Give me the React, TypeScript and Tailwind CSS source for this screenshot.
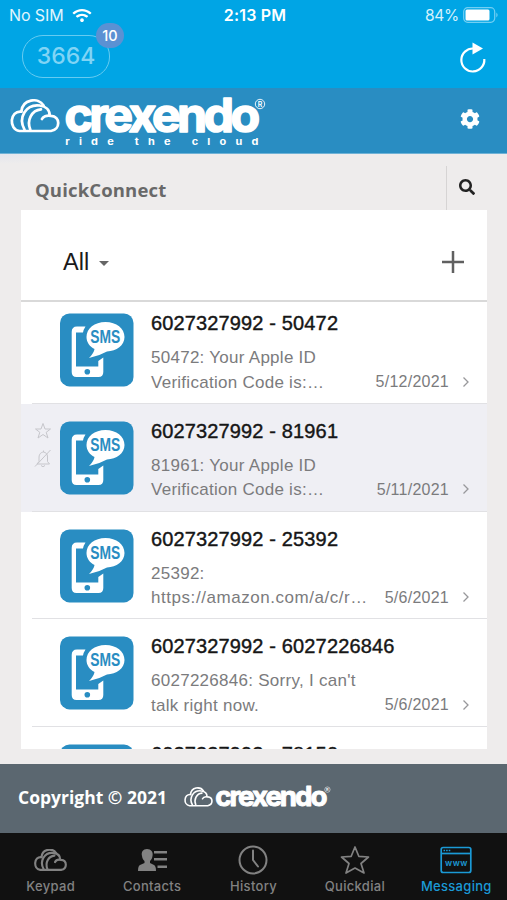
import { FaCog, FaSearch, FaWifi } from "react-icons/fa";

const rows = [
    { title: "6027327992 - 50472", lines: ["50472: Your Apple ID", "Verification Code is:…"], date: "5/12/2021" },
    { title: "6027327992 - 81961", lines: ["81961: Your Apple ID", "Verification Code is:…"], date: "5/11/2021", active: true },
    { title: "6027327992 - 25392", lines: ["25392:", "https://amazon.com/a/c/r…"], date: "5/6/2021", wide: true },
    { title: "6027327992 - 6027226846", lines: ["6027226846: Sorry, I can't", "talk right now."], date: "5/6/2021" },
    { title: "6027327992 - 78150", lines: ["", ""], date: "" },
];

function Cloud({ className, stroke = 8.5 }: { className?: string; stroke?: number }) {
    return (
        <svg viewBox="11 19 155 103" className={className} fill="none" stroke="currentColor" strokeWidth={stroke} strokeLinecap="round">
            <path d="M46 57C10 53 6 112 40 117H138C168 112 168 72 138 70C124 67 113 73 110 80" />
            <path d="M46 57C50 17 98 12 115 38" />
            <path d="M56 113C35 75 61 32 104 38C122 40 134 52 134 68" />
            <path d="M74 113C62 83 78 53 107 50" />
        </svg>
    );
}

function Wordmark({ className }: { className?: string }) {
    return (
        <svg viewBox="0 0 204 54" className={className} fill="currentColor">
            <text x="0.500" y="36" fontFamily="Inter, sans-serif" fontWeight="700" fontSize="47" letterSpacing="-3.500" textLength="192" lengthAdjust="spacingAndGlyphs" stroke="currentColor" strokeWidth="1.600" strokeLinejoin="round">crexendo</text>
            <circle cx="196" cy="8" r="4.700" fill="none" stroke="currentColor" strokeWidth="0.900" />
            <text x="196" y="10.700" textAnchor="middle" fontFamily="Inter, sans-serif" fontWeight="600" fontSize="7">R</text>
        </svg>
    );
}

function SmsIcon() {
    return (
        <svg viewBox="0 0 74 74" className="size-[74px] shrink-0">
            <rect x="0" y="0.400" width="73.500" height="73" rx="9.500" fill="#298dc2" />
            <path fill="#fff" d="M17 13.500H25.500Q23.500 16.500 23 19.500H16V53.500H38.300V48L43.300 44.500V59Q43.300 64 38.500 64H16.500Q11.700 64 11.700 59V19Q11.700 13.500 17 13.500Z" />
            <circle cx="27.300" cy="58.700" r="2.800" fill="#298dc2" />
            <path fill="#fff" d="M45.500 9C56.500 9 64.500 15.500 64.500 24C64.500 32.500 56.500 38 47 38.500Q39 43 29 45Q34 40 34.500 36C29.500 33.500 26.500 29 26.500 24C26.500 15.500 34.500 9 45.500 9Z" />
            <text x="45.300" y="30.300" textAnchor="middle" fontFamily="Liberation Sans, sans-serif" fontWeight="700" fontSize="17.500" textLength="30" lengthAdjust="spacingAndGlyphs" fill="#298dc2">SMS</text>
        </svg>
    );
}

function Row({ row }: { row: (typeof rows)[number] }) {
    return (
        <div className={`flex h-[107.800px] shrink-0 ${row.active ? "bg-[#efeff4]" : "bg-white"}`}>
            <div className="flex w-[11px] shrink-0" />
            <div className="flex flex-1 border-b border-[#e1e1e4]">
                <div className="flex w-[28px] shrink-0 flex-col gap-[9px] pt-[18px] pl-[2px] text-[#c6c6cb]">
                    {row.active && (
                        <>
                            <svg viewBox="0 0 18 18" className="size-[18px]" fill="none" stroke="currentColor" strokeLinejoin="round">
                                <path d="M9 1.500L11 7H16.500L12.200 10.300L14 16L9 12.500L4 16L5.800 10.300L1.500 7H7Z" />
                            </svg>
                            <svg viewBox="0 0 18 20" className="h-[20px] w-[18px]" fill="none" stroke="currentColor">
                                <path d="M1 17.500L16.500 1M3 15H15.500L13.500 12.500V8C13.500 5 12 3.500 9.500 3V1.500M9.500 3C6 3.500 5 6 5 9V12.500L3 15M7 16.500Q9 19 11 16.500" />
                            </svg>
                        </>
                    )}
                </div>
                <div className="pt-[17px]"><SmsIcon /></div>
                <div className="flex flex-1 flex-col pt-[15px] pl-[17px]">
                    <div className="text-[20px] leading-[25px] font-normal tracking-[0.14px] whitespace-nowrap text-[#161616] [-webkit-text-stroke:0.4px_#161616]">{row.title}</div>
                    <div className="mt-[10px] flex justify-between text-[#7b7b7d]">
                        <div className={`text-[17px] leading-[24.500px] whitespace-nowrap ${row.wide ? "w-[217px] tracking-[0.550px]" : "tracking-[0.270px]"}`}>
                            <div className="h-[24.500px] tracking-[0.270px]">{row.lines[0]}</div>
                            <div>{row.lines[1]}</div>
                        </div>
                        {row.date && (
                            <div className="flex items-center gap-[13px] self-end pr-[17px] pb-[1px] text-[16px] leading-[25px] tracking-[0.250px]">
                                {row.date}
                                <svg viewBox="0 0 8 12" className="h-[12px] w-[8px]" fill="none" stroke="#98989b" strokeWidth="1.300">
                                    <path d="M1.500 1.500L6 6L1.500 10.500" />
                                </svg>
                            </div>
                        )}
                    </div>
                </div>
            </div>
        </div>
    );
}

const tabs = [
    { label: "Keypad", icon: <Cloud className="h-[22px] w-[33px]" stroke={10} /> },
    {
        label: "Contacts",
        icon: (
            <svg viewBox="0 0 30 24" className="h-[24px] w-[30px]" fill="currentColor">
                <path d="M10 1C14 1 16.500 4 15.500 8C15 11 14 12 13 13V15L17 17Q19 18 19 23H1Q1 18 3 17L7.500 15V13C6.500 12 5.400 11 5 8C4 4 6 1 10 1Z" />
                <path d="M17 3H30V5.500H17ZM17 10H30V12.500H17ZM20.500 17.500H30V20H20.500Z" />
            </svg>
        ),
    },
    {
        label: "History",
        icon: (
            <svg viewBox="0 0 30 30" className="size-[30px]" fill="none" stroke="currentColor" strokeWidth="2">
                <circle cx="15" cy="15" r="13.500" />
                <path d="M15 5.500V15L20 21.500" strokeLinecap="round" />
            </svg>
        ),
    },
    {
        label: "Quickdial",
        icon: (
            <svg viewBox="0 0 30 30" className="size-[30px]" fill="none" stroke="currentColor" strokeWidth="1.700" strokeLinejoin="round">
                <path d="M15 2L18.800 11.300L28.500 12L21 18.500L24 28L15 23L6 28L9 18.500L1.500 12L11.200 11.300Z" />
            </svg>
        ),
    },
    {
        label: "Messaging",
        active: true,
        icon: (
            <svg viewBox="0 0 32 28" className="h-[28px] w-[32px]" fill="none" stroke="currentColor" strokeWidth="1.700">
                <rect x="1.200" y="1.500" width="29.600" height="25" rx="2" />
                <path d="M1.200 7.500H30.800" />
                <path d="M3.500 4.500H10.500" strokeDasharray="1.600 1" />
                <text x="5" y="19.500" fontFamily="Inter, sans-serif" fontWeight="600" fontSize="8.500" textLength="22.500" fill="currentColor" stroke="none">www</text>
            </svg>
        ),
    },
];

export default function App() {
    return (
        <div className="flex h-[900px] w-[507px] flex-col overflow-hidden bg-[#eeecec] font-['Liberation_Sans',sans-serif]">
            <header className="h-[87.500px] shrink-0 bg-[#00a5e5] font-['Inter',sans-serif] text-white">
                <div className="grid h-[30px] grid-cols-3 items-center pr-[8px] pl-[9px] text-[16px]">
                    <div className="flex items-center gap-[8px] text-[#e1f5fd]">
                        <span className="tracking-[-0.1px]">No SIM</span>
                        <FaWifi className="h-[15px] w-[20px] text-white" />
                    </div>
                    <div className="pl-[2px] text-center font-semibold tracking-[0.2px] whitespace-nowrap">2:13 PM</div>
                    <div className="flex items-center justify-end gap-[4px] text-[#d5f1fc]">
                        <span className="pt-px text-[15.500px] tracking-[-0.3px]">84%</span>
                        <svg viewBox="0 0 36 16" className="h-[16px] w-[36px]">
                            <rect x="0.700" y="0.700" width="31" height="14.600" rx="4" fill="none" stroke="#72cff3" strokeWidth="1.200" />
                            <rect x="2.500" y="2.500" width="24" height="11" rx="1.500" fill="#fff" />
                            <path d="M33.300 5.500Q36 8 33.300 10.500Z" fill="#72cff3" />
                        </svg>
                    </div>
                </div>
                <div className="flex justify-between pt-[5px] pr-[20px] pl-[22px]">
                    <div className="relative flex h-[43px] w-[88px] items-center justify-center rounded-[21px] border-[1.500px] border-[#66cbf1] text-[23px] font-medium text-[#80d4f5]">
                        3664
                        <span className="absolute -top-[13px] -right-[15px] flex h-[25px] w-[28px] items-center justify-center rounded-full bg-[#5b91d3] text-[14.500px] font-medium text-white">10</span>
                    </div>
                    <svg viewBox="0 0 28 32" className="mt-[7px] h-[32px] w-[28px]" fill="none" stroke="#fff" strokeWidth="2.200">
                        <path d="M14.500 6.500A11.500 11.500 0 1 0 25.300 17" />
                        <path d="M13.500 0.500L24 6.500L13.500 12.500Z" fill="#fff" stroke="none" />
                    </svg>
                </div>
            </header>

            <div className="flex h-[66px] shrink-0 items-start justify-between border-b border-[#6fb2d6] bg-[#298dc2] pr-[27px] pl-[10px] text-white">
                <div className="flex pt-[8px]">
                    <Cloud className="mt-[3px] h-[34px] w-[50px]" />
                    <div className="ml-[4px] flex flex-col">
                        <Wordmark className="h-[54px] w-[204px] overflow-visible" />
                        <svg viewBox="0 0 204 16" className="-mt-[16px] h-[16px] w-[204px] overflow-visible" fill="currentColor">
                            <text x="1" y="11.500" transform="scale(1.150 1)" fontFamily="Inter, sans-serif" fontWeight="700" fontSize="9.500" textLength="168">ride the cloud</text>
                        </svg>
                    </div>
                </div>
                <FaCog className="mt-[21px] size-[20px]" />
            </div>

            <div className="flex h-[56.500px] shrink-0 items-end justify-between bg-[radial-gradient(ellipse_at_top_left,#e3e6ee_0,#eeecec_90px)] pl-[35px]">
                <h1 className="pb-[6px] font-['Open_Sans',sans-serif] text-[18.500px] font-bold tracking-[0.150px] text-[#696969]">QuickConnect</h1>
                <div className="flex h-[44px] w-[61px] items-start border-l border-[#d6d4d4] pt-[13px] pl-[12px]">
                    <FaSearch className="size-[16px] text-[#222]" />
                </div>
            </div>

            <main className="mx-[21px] flex h-[539px] w-[466px] shrink-0 flex-col rounded-b-[2px] bg-white">
                <div className="flex h-[92px] shrink-0 items-center justify-between border-b-2 border-[#d9d9d9] pt-[13px] pr-[22px] pl-[42px]">
                    <div className="flex items-center gap-[10px] pt-[2px] text-[23.500px] text-[#1a1a1a]">
                        All
                        <span className="mt-[2px] border-x-[5px] border-t-[5.500px] border-x-transparent border-t-[#666]" />
                    </div>
                    <svg viewBox="0 0 24 24" className="size-[24px]" stroke="#606060" strokeWidth="2.500">
                        <path d="M12 1V23M1 12H23" />
                    </svg>
                </div>
                <div className="flex flex-1 flex-col overflow-hidden">
                    <div className="-mt-[6px] flex shrink-0 flex-col">
                        {rows.map((row) => <Row key={row.title} row={row} />)}
                    </div>
                </div>
            </main>

            <footer className="mt-[15px] flex h-[69px] shrink-0 items-center bg-[#5b6770] pb-[3px] pl-[18px] text-white">
                <span className="w-[166px] font-['Open_Sans',sans-serif] text-[17.500px] font-bold whitespace-nowrap">Copyright © 2021</span>
                <Cloud className="h-[20px] w-[29px]" />
                <Wordmark className="mt-[6px] ml-[2px] h-[31px] w-[117px] overflow-visible" />
            </footer>

            <nav className="grid flex-1 grid-cols-5 bg-[#111] font-['Inter',sans-serif]">
                {tabs.map((tab) => (
                    <div key={tab.label} className={`flex flex-col items-center pt-[10px] ${tab.active ? "text-[#1b9ad6]" : "text-[#828282]"}`}>
                        <div className="flex h-[33px] items-center justify-center">{tab.icon}</div>
                        <span className="text-[13px] leading-[20px] font-medium tracking-[0.3px]">{tab.label}</span>
                    </div>
                ))}
            </nav>
        </div>
    );
}
